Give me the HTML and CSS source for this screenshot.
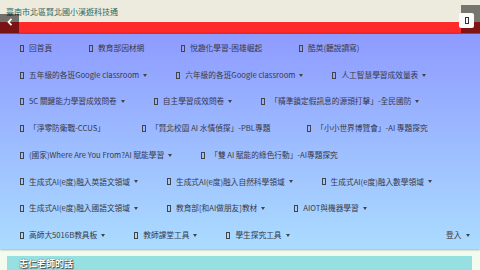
FILE: index.html
```html
<!DOCTYPE html>
<html lang="zh-Hant">
<head>
    <meta charset="UTF-8">
    <meta name="viewport" content="width=device-width, initial-scale=1.0">
    <title>臺南市北區賢北國小溪遊科技通</title>
    <link rel="stylesheet" href="styles.css">
</head>
<body>
    <header class="banner">
        <div class="site-title">臺南市北區賢北國小溪遊科技通</div>
        <div class="red-band"></div>
        <div class="tab-left">
            <svg width="6" height="8" viewBox="0 0 6 8"><path d="M4.5 0.8 L1.5 4 L4.5 7.2" fill="none" stroke="#fff" stroke-width="1.8"/></svg>
        </div>
        <div class="tab-right"><span class="menu-btn"><i class="tofu"></i></span></div>
    </header>

    <nav class="menu">
        <div class="menu-row">
            <a class="item"><i class="tofu"></i>回首頁</a>
            <a class="item"><i class="tofu"></i>教育部因材網</a>
            <a class="item"><i class="tofu"></i>悅趣化學習-困雄崛起</a>
            <a class="item"><i class="tofu"></i>酷英(聽說讀寫)</a>
        </div>
        <div class="menu-row">
            <a class="item"><i class="tofu"></i>五年級的各班Google classroom<b class="caret"></b></a>
            <a class="item"><i class="tofu"></i>六年級的各班Google classroom<b class="caret"></b></a>
            <a class="item"><i class="tofu"></i>人工智慧學習成效量表<b class="caret"></b></a>
        </div>
        <div class="menu-row">
            <a class="item"><i class="tofu"></i>5C 關鍵能力學習成效問卷<b class="caret"></b></a>
            <a class="item"><i class="tofu"></i>自主學習成效問卷<b class="caret"></b></a>
            <a class="item"><i class="tofu"></i>「精準鎖定假訊息的源頭打擊」-全民國防<b class="caret"></b></a>
        </div>
        <div class="menu-row">
            <a class="item"><i class="tofu"></i>「淨零防衛戰-CCUS」</a>
            <a class="item"><i class="tofu"></i>「賢北校園 AI 水情偵探」-PBL專題</a>
            <a class="item"><i class="tofu"></i>「小小世界博覽會」-AI 專題探究</a>
        </div>
        <div class="menu-row">
            <a class="item"><i class="tofu"></i>(國家)Where Are You From?AI 賦能學習<b class="caret"></b></a>
            <a class="item"><i class="tofu"></i>「雙 AI 賦能的綠色行動」-AI專題探究</a>
        </div>
        <div class="menu-row">
            <a class="item"><i class="tofu"></i>生成式AI(e度)融入英語文領域<b class="caret"></b></a>
            <a class="item"><i class="tofu"></i>生成式AI(e度)融入自然科學領域<b class="caret"></b></a>
            <a class="item"><i class="tofu"></i>生成式AI(e度)融入數學領域<b class="caret"></b></a>
        </div>
        <div class="menu-row">
            <a class="item"><i class="tofu"></i>生成式AI(e度)融入國語文領域<b class="caret"></b></a>
            <a class="item"><i class="tofu"></i>教育部[和AI做朋友]教材<b class="caret"></b></a>
            <a class="item"><i class="tofu"></i>AIOT與機器學習<b class="caret"></b></a>
        </div>
        <div class="menu-row">
            <a class="item"><i class="tofu"></i>高師大5016B教具板<b class="caret"></b></a>
            <a class="item"><i class="tofu"></i>教師課堂工具<b class="caret"></b></a>
            <a class="item"><i class="tofu"></i>學生探究工具<b class="caret"></b></a>
            <a class="item login">登入<b class="caret"></b></a>
        </div>
    </nav>

    <main class="content">
        <section class="card">
            <h2>志仁老師的話</h2>
        </section>
    </main>
</body>
</html>
```

FILE: styles.css
```css
body {
    margin: 0;
    padding: 0;
    font-family: "Noto Sans CJK TC", "Noto Sans", sans-serif;
    background: #f2fbee;
    overflow: hidden;
}
.banner {
    position: relative;
    background: #ecebdd;
}
.site-title {
    height: 14px;
    padding: 7px 0 0 6px;
    font-size: 8px;
    line-height: 9px;
    color: #2b6864;
    border-bottom: 1px solid #f6f3e6;
}
.red-band {
    height: 12px;
    background: linear-gradient(#ff2b2b, #ff2b2b 80%, #e52222);
}
.tab-left {
    position: absolute;
    left: 0;
    top: 14px;
    width: 19px;
    height: 19px;
    background: rgba(0, 0, 0, 0.52);
    display: flex;
    justify-content: center;
    padding-top: 4px;
    box-sizing: border-box;
}
.tab-right {
    position: absolute;
    right: 0;
    top: 5px;
    width: 19px;
    height: 28px;
    background: rgba(0, 0, 0, 0.5);
}
.menu-btn {
    position: absolute;
    left: -2px;
    top: 8px;
    width: 15px;
    height: 15px;
    background: #fbfbfb;
    border-radius: 2px;
    display: flex;
    align-items: center;
    justify-content: center;
}
.menu-btn .tofu {
    margin: 0;
    border-color: #333;
}
.menu {
    padding: 1px 0 0 1.5px;
    height: 214px;
    background: linear-gradient(#8e9bff, #abdcff);
    box-shadow: 0 1px 2px rgba(0, 0, 0, 0.3);
}
.menu-row {
    display: flex;
}
.item {
    display: flex;
    align-items: center;
    padding: 0 18.5px;
    font-size: 7.7px;
    line-height: 26.7px;
    color: #383848;
    white-space: nowrap;
    cursor: pointer;
}
.tofu {
    display: inline-block;
    width: 2px;
    height: 5px;
    border: 1px solid #444;
    margin-right: 5px;
}
.caret {
    width: 0;
    height: 0;
    margin: 0 -8px 0 4px;
    border-left: 2.5px solid transparent;
    border-right: 2.5px solid transparent;
    border-top: 3px solid #444;
}
.login {
    margin-left: auto;
}
.content {
    padding: 7px 8px 0 7px;
}
.card {
    background: #97e0e2;
    padding: 2px 12px 20px;
}
.card h2 {
    margin: 0;
    font-size: 9px;
    line-height: 12px;
    font-weight: bold;
    color: #fff;
    text-shadow: 0 0 1px #333, 1px 1px 1px #444;
}
```
